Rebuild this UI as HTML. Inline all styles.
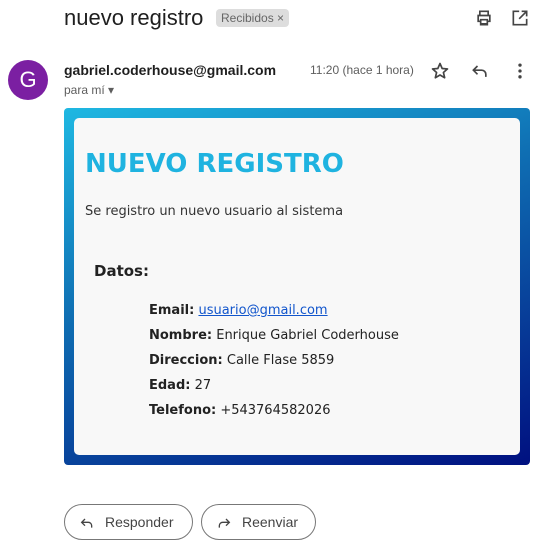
<!DOCTYPE html>
<html><head><meta charset="utf-8"><style>
body{margin:0;background:#fff;font-family:"Liberation Sans",Arial,sans-serif;width:551px;height:557px;position:relative;overflow:hidden;color:#1f1f1f}
.abs{position:absolute}
.title{left:64px;top:5px;font-size:22px;color:#1f1f1f;white-space:nowrap}
.tag{left:216px;top:9px;background:#ddd;color:#666;font-size:12px;padding:2px 5px;border-radius:4px}
.av{left:8px;top:60px;width:40px;height:40px;border-radius:50%;background:#7b1fa2;color:#fff;font-size:22px;text-align:center;line-height:40px}
.from{left:64px;top:62px;font-size:14px;font-weight:bold;color:#1f1f1f}
.time{left:310px;top:63px;font-size:12px;color:#5e5e5e}
.para{left:64px;top:83px;font-size:12px;color:#5e5e5e}
.box{left:64px;top:108px;width:466px;height:357px;border-radius:4px;background:linear-gradient(160deg,#1fb8e2 0%,#0f6fb3 40%,#001080 100%)}
.inner{left:74px;top:118px;width:446px;height:337px;border-radius:5px;background:#f8f8f8;font-family:"DejaVu Sans",Verdana,sans-serif}
.h{left:11px;top:31px;font-size:26px;font-weight:bold;color:#1fb3e0;white-space:nowrap}
.p{left:11px;top:86px;font-size:13px;color:#333;white-space:nowrap}
.d{left:20px;top:144px;font-size:15px;font-weight:bold;color:#222}
.li{left:75px;font-size:13px;color:#222;white-space:nowrap}
.li b{color:#222}
.btn{top:504px;border:1px solid #777;border-radius:18px;font-size:14px;color:#444;line-height:34px;box-sizing:border-box;height:36px}
</style></head><body>
<div class="abs title">nuevo registro</div>
<div class="abs tag">Recibidos ×</div>
<svg class="abs" style="left:474px;top:8px" width="20" height="20" viewBox="0 0 24 24"><path d="M7 8V4h10v4M5 9h14v7h-3v4H8v-4H5z M8 14h8v5H8z" fill="none" stroke="#444" stroke-width="2"/></svg>
<svg class="abs" style="left:510px;top:8px" width="20" height="20" viewBox="0 0 24 24"><path d="M11 4H4v16h16v-7M14 4h6v6M20 4l-9 9" fill="none" stroke="#444" stroke-width="2"/></svg>
<div class="abs av">G</div>
<div class="abs from">gabriel.coderhouse@gmail.com</div>
<div class="abs time">11:20 (hace 1 hora)</div>
<svg class="abs" style="left:430px;top:61px" width="20" height="20" viewBox="0 0 24 24"><path d="M12 3l2.6 6 6.4.5-4.9 4.3 1.5 6.3L12 16.8 6.4 20.1l1.5-6.3L3 9.5 9.4 9z" fill="none" stroke="#444" stroke-width="2" stroke-linejoin="round"/></svg>
<svg class="abs" style="left:470px;top:61px" width="20" height="20" viewBox="0 0 24 24"><path d="M9 6L4 11l5 5M4 11h10a5 5 0 0 1 5 5v3" fill="none" stroke="#444" stroke-width="2"/></svg>
<svg class="abs" style="left:510px;top:61px" width="20" height="20" viewBox="0 0 24 24"><circle cx="12" cy="5" r="2" fill="#444"/><circle cx="12" cy="12" r="2" fill="#444"/><circle cx="12" cy="19" r="2" fill="#444"/></svg>
<div class="abs para">para mí ▾</div>
<div class="abs box"></div>
<div class="abs inner">
<div class="abs h">NUEVO REGISTRO</div>
<div class="abs p">Se registro un nuevo usuario al sistema</div>
<div class="abs d">Datos:</div>
<div class="abs li" style="top:185px"><b>Email:</b> <span style="color:#1155cc;text-decoration:underline">usuario@gmail.com</span></div>
<div class="abs li" style="top:210px"><b>Nombre:</b> Enrique Gabriel Coderhouse</div>
<div class="abs li" style="top:235px"><b>Direccion:</b> Calle Flase 5859</div>
<div class="abs li" style="top:260px"><b>Edad:</b> 27</div>
<div class="abs li" style="top:285px"><b>Telefono:</b> +543764582026</div>
</div>
<div class="abs btn" style="left:64px;width:129px"><svg class="abs" style="left:14px;top:10px" width="16" height="16" viewBox="0 0 24 24"><path d="M9 6L4 11l5 5M4 11h10a5 5 0 0 1 5 5v3" fill="none" stroke="#444" stroke-width="2"/></svg><span class="abs" style="left:40px">Responder</span></div>
<div class="abs btn" style="left:201px;width:115px"><svg class="abs" style="left:14px;top:10px" width="16" height="16" viewBox="0 0 24 24"><path d="M15 6l5 5-5 5M20 11H10a5 5 0 0 0-5 5v3" fill="none" stroke="#444" stroke-width="2"/></svg><span class="abs" style="left:40px">Reenviar</span></div>
</body></html>
